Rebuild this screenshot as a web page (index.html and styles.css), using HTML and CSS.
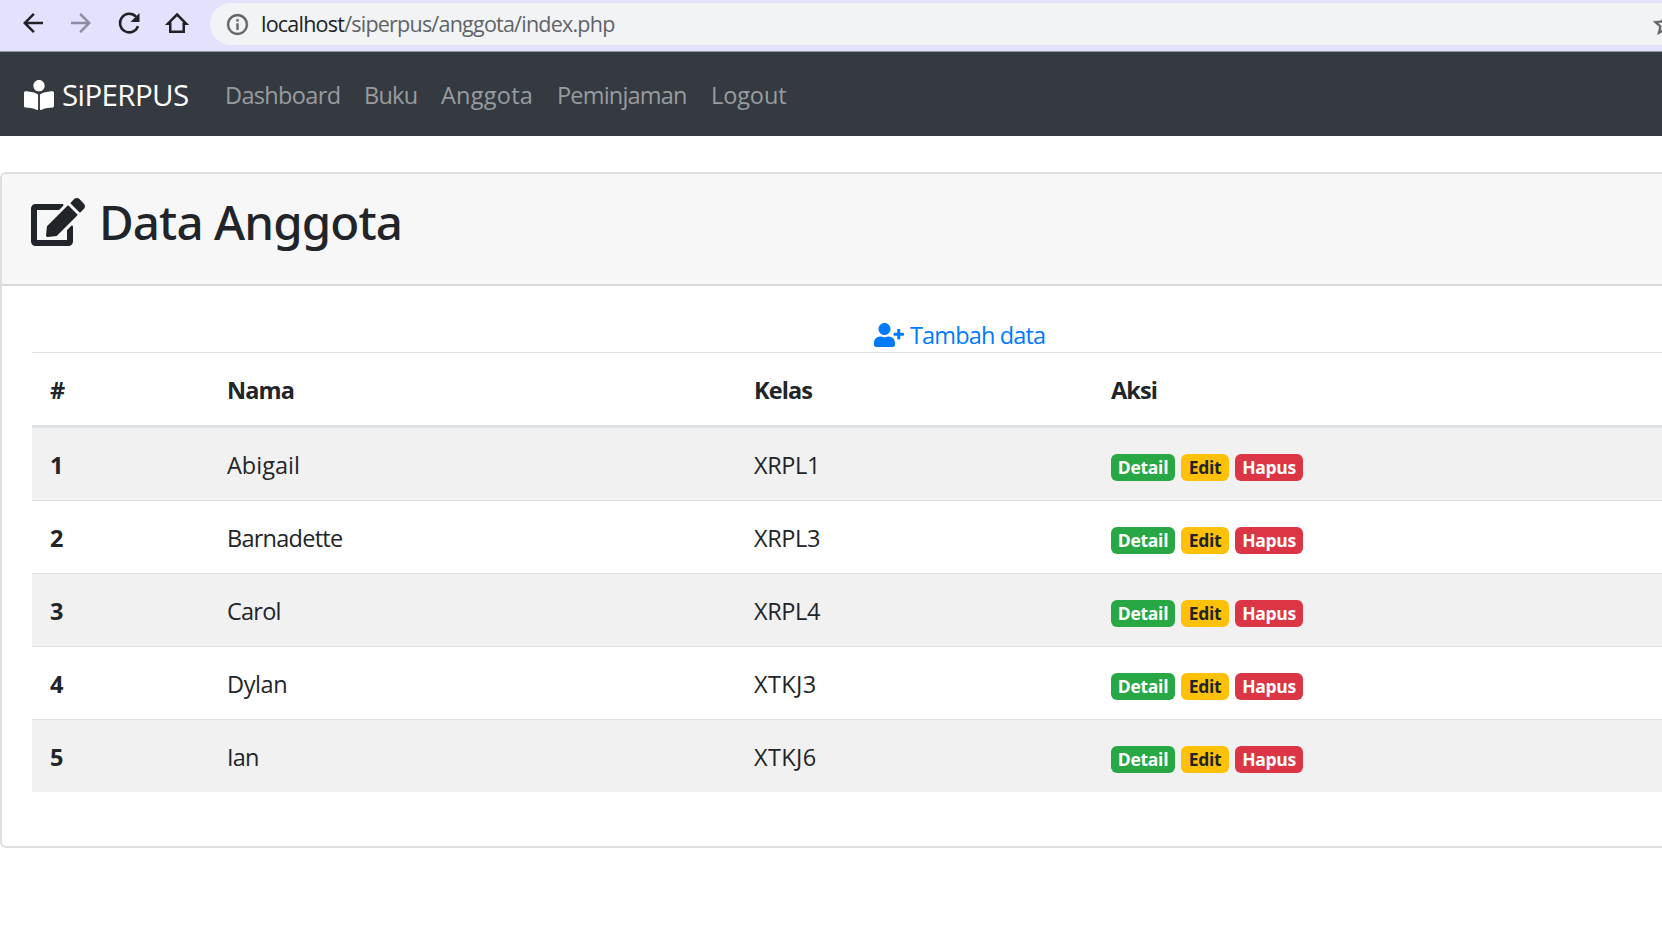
FILE: index.html
```html
<!DOCTYPE html>
<html lang="id">
<head>
<meta charset="utf-8">
<title>SiPERPUS</title>
<link rel="stylesheet" href="styles.css">
</head>
<body>
<header class="toolbar">
  <div class="controls">
    <svg viewBox="0 0 24 24"><path d="M20 11H7.83l5.59-5.59L12 4l-8 8 8 8 1.41-1.41L7.83 13H20z"/></svg>
    <svg class="disabled" viewBox="0 0 24 24"><path d="M4 11h12.17l-5.59-5.59L12 4l8 8-8 8-1.41-1.41L16.17 13H4z"/></svg>
    <svg viewBox="0 0 24 24"><path d="M19.2 14.5A7.4 7.4 0 1 1 17.6 7" fill="none" stroke="#202124" stroke-width="2"/><path d="M20.4 4v7.2h-7.2z"/></svg>
    <svg viewBox="0 0 24 24"><path d="M12 5.2 19.3 12.5H17.4V19H6.6V12.5H4.7z" fill="none" stroke="#202124" stroke-width="2"/></svg>
  </div>
  <div class="address">
    <svg class="info" viewBox="0 0 24 24"><path d="M11 7h2v2h-2zm0 4h2v6h-2zm1-9C6.48 2 2 6.48 2 12s4.48 10 10 10 10-4.48 10-10S17.52 2 12 2zm0 18c-4.41 0-8-3.59-8-8s3.59-8 8-8 8 3.59 8 8-3.59 8-8 8z" stroke="currentColor" stroke-width=".3"/></svg>
    <span class="url"><span class="host">localhost</span>/siperpus/anggota/index.php</span>
    <svg class="star" viewBox="0 0 24 24"><path d="M22 9.24l-7.19-.62L12 2 9.19 8.63 2 9.24l5.46 4.73L5.82 21 12 17.27 18.18 21l-1.63-7.03L22 9.24zM12 15.4l-3.76 2.27 1-4.28-3.32-2.88 4.38-.38L12 6.1l1.71 4.04 4.38.38-3.32 2.88 1 4.28L12 15.4z" stroke="currentColor" stroke-width=".4"/></svg>
  </div>
</header>
<nav class="navbar">
  <a class="brand"><svg viewBox="0 0 512 512"><path d="M352 96c0-53.02-42.98-96-96-96s-96 42.98-96 96 42.98 96 96 96 96-42.98 96-96zM233.59 241.1c-59.33-36.32-155.43-46.3-203.79-49.05C13.55 191.13 0 203.51 0 219.14v222.8c0 14.33 11.59 26.28 26.49 27.05 43.66 2.29 131.99 10.68 193.04 41.43 9.37 4.72 20.48-1.71 20.48-11.87V252.56c-.01-4.67-2.32-8.95-6.42-11.46zm248.61-49.05c-48.35 2.74-144.46 12.73-203.78 49.05-4.1 2.51-6.41 6.96-6.41 11.63v245.79c0 10.19 11.14 16.63 20.54 11.9 61.04-30.72 149.32-39.11 192.97-41.4 14.9-.78 26.49-12.73 26.49-27.06V219.14c-.01-15.63-13.56-28.01-29.81-27.09z"/></svg><span>SiPERPUS</span></a>
  <div class="links"><a class="l1">Dashboard</a><a class="l2">Buku</a><a class="l3">Anggota</a><a class="l4">Peminjaman</a><a class="l5">Logout</a></div>
</nav>
<main class="card">
  <div class="card-header"><svg viewBox="0 0 576 512"><path d="M402.6 83.2l90.2 90.2c3.8 3.8 3.8 10 0 13.8L274.4 405.6l-92.8 10.3c-12.4 1.4-22.9-9.1-21.5-21.5l10.3-92.8L388.8 83.2c3.8-3.8 10-3.8 13.8 0zm162-22.9l-48.8-48.8c-15.2-15.2-39.9-15.2-55.2 0l-35.4 35.4c-3.8 3.8-3.8 10 0 13.8l90.2 90.2c3.8 3.8 10 3.8 13.8 0l35.4-35.4c15.2-15.3 15.2-40 0-55.2zM384 346.2V448H64V128h229.8c3.2 0 6.2-1.3 8.5-3.5l40-40c7.6-7.6 2.2-20.5-8.5-20.5H48C21.5 64 0 85.5 0 112v352c0 26.5 21.5 48 48 48h352c26.5 0 48-21.5 48-48V306.2c0-10.7-12.9-16-20.5-8.5l-40 40c-2.2 2.3-3.5 5.3-3.5 8.5z"/></svg><h1>Data Anggota</h1></div>
  <div class="card-body">
    <a class="add"><svg viewBox="0 0 640 512"><path d="M624 208h-64v-64c0-8.8-7.2-16-16-16h-32c-8.8 0-16 7.2-16 16v64h-64c-8.8 0-16 7.2-16 16v32c0 8.8 7.2 16 16 16h64v64c0 8.8 7.2 16 16 16h32c8.8 0 16-7.2 16-16v-64h64c8.8 0 16-7.2 16-16v-32c0-8.8-7.2-16-16-16zm-400 48c70.7 0 128-57.3 128-128S294.7 0 224 0 96 57.3 96 128s57.3 128 128 128zm89.6 32h-16.7c-22.2 10.2-46.9 16-72.9 16s-50.6-5.8-72.9-16h-16.7C60.2 288 0 348.2 0 422.4V464c0 26.5 21.5 48 48 48h352c26.5 0 48-21.5 48-48v-41.6c0-74.2-60.2-134.4-134.4-134.4z"/></svg><span>Tambah data</span></a>
    <div class="table">
      <div class="row head"><b>#</b><b>Nama</b><b>Kelas</b><b>Aksi</b></div>
      <div class="row odd"><b>1</b><span class="wide">Abigail</span><span>XRPL1</span><div class="actions"><a class="badge green">Detail</a><a class="badge yellow">Edit</a><a class="badge red">Hapus</a></div></div>
      <div class="row"><b>2</b><span class="tight">Barnadette</span><span>XRPL3</span><div class="actions"><a class="badge green">Detail</a><a class="badge yellow">Edit</a><a class="badge red">Hapus</a></div></div>
      <div class="row odd"><b>3</b><span class="tight">Carol</span><span>XRPL4</span><div class="actions"><a class="badge green">Detail</a><a class="badge yellow">Edit</a><a class="badge red">Hapus</a></div></div>
      <div class="row"><b>4</b><span>Dylan</span><span class="code">XTKJ3</span><div class="actions"><a class="badge green">Detail</a><a class="badge yellow">Edit</a><a class="badge red">Hapus</a></div></div>
      <div class="row odd"><b>5</b><span class="tight">Ian</span><span class="code">XTKJ6</span><div class="actions"><a class="badge green">Detail</a><a class="badge yellow">Edit</a><a class="badge red">Hapus</a></div></div>
    </div>
  </div>
</main>
</body>
</html>
```
FILE: styles.css
```css
* { box-sizing: border-box; }
body {
  margin: 0;
  background: #fff;
  color: #212529;
  font: 23.5px/36px "Open Sans", "Noto Sans", sans-serif;
  letter-spacing: -0.4px;
}
svg { display: block; flex: none; fill: currentColor; }
a { white-space: nowrap; }

.toolbar {
  display: flex;
  height: 52px;
  padding-top: 3px;
  background: #e3e1fe;
  border-bottom: 1px solid #9395a5;
  color: #202124;
}
.controls { display: flex; flex: none; gap: 18px; width: 210px; padding: 5px 0 0 18px; }
.controls svg { width: 30px; height: 30px; }
.controls .disabled { color: #8d8ca1; }
.address {
  display: flex;
  flex: 1;
  min-width: 0;
  align-items: center;
  height: 42px;
  padding-left: 15px;
  overflow: hidden;
  background: #f1f3f4;
  border-radius: 21px 0 0 21px;
  color: #5f6368;
}
.info { width: 25px; height: 25px; }
.url {
  flex: none;
  width: 1401px;
  padding-left: 11px;
  font-size: 21.5px;
  line-height: 40px;
  letter-spacing: -0.77px;
}
.host { color: #202124; }
.star { width: 27px; height: 27px; }

.navbar {
  display: flex;
  height: 84px;
  padding-left: 24px;
  background: #343a40;
}
.brand {
  display: flex;
  width: 201px;
  padding-top: 27px;
  color: #fff;
  font-size: 29.5px;
  letter-spacing: -0.6px;
}
.brand svg { width: 30px; height: 30px; margin: 1px 8px 0 0; }
.brand span { line-height: 32px; }
.links { display: flex; padding-top: 25px; color: #999c9f; }
.l1 { width: 139px; letter-spacing: -0.65px; }
.l2 { width: 77px; letter-spacing: -0.75px; }
.l3 { width: 116px; letter-spacing: 0.25px; }
.l4 { width: 154px; letter-spacing: -0.8px; }
.l5 { letter-spacing: -0.1px; }

.card {
  height: 676px;
  margin-top: 36px;
  border: 2px solid #dfdfdf;
  border-right: 0;
  border-radius: 6px 0 0 6px;
}
.card-header {
  display: flex;
  height: 112px;
  padding: 24px 29px;
  background: #f7f7f7;
  border-bottom: 2px solid #d8d8d8;
  border-top-left-radius: 4px;
}
.card-header svg { width: 54px; height: 48px; }
h1 {
  margin: -2px 0 0 14px;
  font-family: "Noto Sans", sans-serif;
  font-size: 47.5px;
  line-height: 52px;
  font-weight: 500;
  letter-spacing: -0.9px;
}
.card-body { padding: 30px 0 0 30px; }
.add {
  display: flex;
  height: 36px;
  padding: 1px 0 0 842px;
  color: #007bff;
  letter-spacing: -0.85px;
}
.add svg { width: 30px; height: 24px; margin: 6px 6px 0 0; }
.row {
  display: grid;
  grid-template-columns: 177px 527px 357px 1fr;
  height: 73px;
  padding: 19px 0 0;
  border-top: 1px solid #dee2e6;
}
.row > * { padding-left: 18px; }
.head { height: 76px; border-bottom: 3px solid #dee2e6; }
.head b { letter-spacing: -0.9px; }
.head + .row { border-top: 0; height: 72px; }
.odd { background: #f1f1f1; }
.wide { letter-spacing: 0; }
.tight { letter-spacing: -0.75px; }
.code { letter-spacing: 0.4px; }
.actions { display: flex; gap: 6px; padding-top: 7px; }
.badge {
  height: 27px;
  border-radius: 6px;
  color: #fff;
  font-size: 17.5px;
  font-weight: 700;
  line-height: 27px;
  text-align: center;
  letter-spacing: -0.3px;
}
.green { width: 64px; background: #28a745; }
.yellow { width: 48px; background: #ffc107; color: #212529; }
.red { width: 68px; background: #dc3545; }
```
